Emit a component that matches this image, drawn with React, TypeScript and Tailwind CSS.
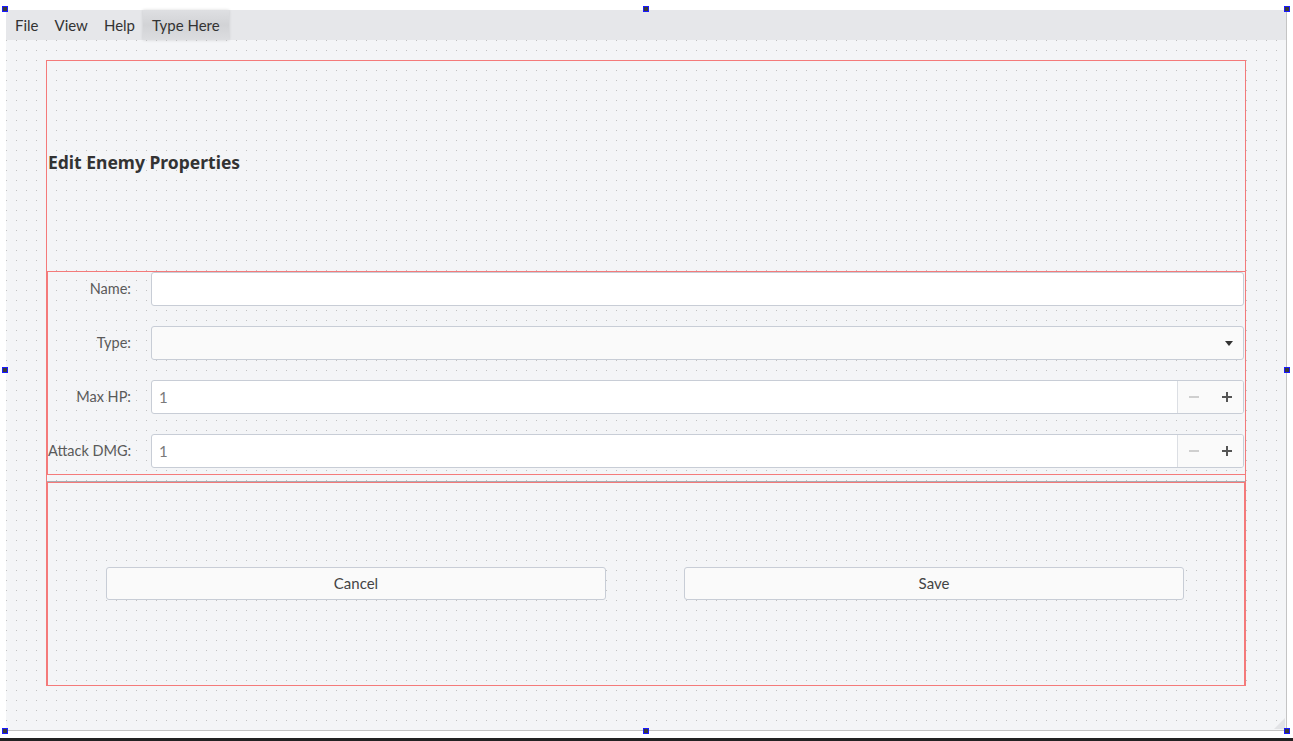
import React from "react";

const font = { fontFamily: 'Lato, "Noto Sans", "Liberation Sans", sans-serif' };
const titleFont = { fontFamily: '"Noto Sans", "Liberation Sans", sans-serif' };

function Handle({ className }: { className: string }) {
  return <div className={`absolute w-[6px] h-[6px] border border-[#1a1aff] bg-[#3a3a3a] ${className}`} />;
}

function SpinBox() {
  return (
    <div className="flex h-[34px] flex-1 bg-white border border-[#c8cdd6] rounded-[3px] overflow-hidden">
      <div className="flex-1 flex items-center pl-[7px] text-[15px] text-[#7a7a7a]">1</div>
      <div className="w-[66px] flex items-center justify-around bg-[#fafafa] border-l border-[#dcdfe4]">
        <div className="w-[10px] h-[2px] bg-[#cfcfcf]" />
        <div className="relative w-[10px] h-[10px]">
          <div className="absolute left-0 top-[4px] w-[10px] h-[2px] bg-[#555]" />
          <div className="absolute left-[4px] top-0 w-[2px] h-[10px] bg-[#555]" />
        </div>
      </div>
    </div>
  );
}

function Row({ label, children }: { label: string; children: React.ReactNode }) {
  return (
    <div className="flex items-center h-[34px]">
      <div className="w-[83px] text-right text-[14.5px] text-[#5a5a5a] whitespace-nowrap">{label}</div>
      <div className="flex flex-1 ml-[20px]">{children}</div>
    </div>
  );
}

export default function App() {
  return (
    <div className="relative w-[1293px] h-[741px] bg-white overflow-hidden" style={font}>
      <div className="pt-[10px] pl-[6px]">
        <div className="flex flex-col w-[1281px] h-[721px] bg-[#f4f5f7] border-r border-b border-[#c4c4c4]">
          {/* Menu bar */}
          <div className="flex h-[30px] bg-[#e6e7ea] text-[15px] text-[#333] items-stretch">
            <div className="pl-[9px] pr-[8px] flex items-center">File</div>
            <div className="px-[8px] flex items-center">View</div>
            <div className="px-[8px] flex items-center">Help</div>
            <div className="px-[9px] flex items-center bg-[linear-gradient(to_bottom,#dedfe2,#d2d3d6_50%,#dcdde0)] shadow-[0_0_3px_rgba(0,0,0,0.15)]">
              Type Here
            </div>
          </div>

          {/* Canvas */}
          <div className="relative flex-1 pl-[40px] pt-[20px] bg-[radial-gradient(circle_at_0_0,#c2c2c2_1px,transparent_1px)] bg-size-[10px_10px]">
            <div className="w-[1200px] flex flex-col border-l border-r border-[#f47a7a]">
              {/* Title */}
              <div className="h-[211px] border-t border-[#f47a7a] flex items-center pl-[1px] pb-[6px]">
                <h1 className="text-[17.5px] font-bold text-[#333] leading-none" style={titleFont}>
                  Edit Enemy Properties
                </h1>
              </div>

              {/* Form */}
              <div className="border border-[#f47a7a] mr-[-1px] pt-0 pb-[6px] pr-[1px] flex flex-col gap-[20px]">
                <Row label="Name:">
                  <div className="h-[34px] flex-1 bg-white border border-[#c8cdd6] rounded-[3px]" />
                </Row>
                <Row label="Type:">
                  <div className="h-[34px] flex-1 bg-[#fafafa] border border-[#c8cdd6] rounded-[3px] flex items-center justify-end pr-[10px]">
                    <svg width="8" height="5" viewBox="0 0 8 5">
                      <path d="M0 0 L8 0 L4 5 Z" fill="#333" />
                    </svg>
                  </div>
                </Row>
                <Row label="Max HP:">
                  <SpinBox />
                </Row>
                <Row label="Attack DMG:">
                  <SpinBox />
                </Row>
              </div>

              {/* Buttons */}
              <div className="mt-[6px] border-t border-[#a9adb3]">
                <div className="h-[204px] border border-[#f47a7a] flex items-center pl-[58px] pb-[2px]">
                  <div className="grid grid-cols-[500px_500px] gap-[78px]">
                    <button className="h-[33px] bg-[#fafafa] border border-[#c8cdd6] rounded-[3px] text-[15px] text-[#444]">
                      Cancel
                    </button>
                    <button className="h-[33px] bg-[#fafafa] border border-[#c8cdd6] rounded-[3px] text-[15px] text-[#444]">
                      Save
                    </button>
                  </div>
                </div>
              </div>
            </div>

            {/* size grip */}
            <svg className="absolute right-[1px] bottom-[1px]" width="11" height="11" viewBox="0 0 11 11">
              <path d="M11 0 L11 11 L0 11 Z" fill="#e2e3e6" />
            </svg>
          </div>
        </div>
      </div>
      <div className="absolute left-0 bottom-0 w-full h-[3px] bg-[#222]" />

      <Handle className="left-[2px] top-[6px]" />
      <Handle className="left-[643px] top-[6px]" />
      <Handle className="left-[1284px] top-[6px]" />
      <Handle className="left-[2px] top-[367px]" />
      <Handle className="left-[1284px] top-[367px]" />
      <Handle className="left-[2px] top-[728px]" />
      <Handle className="left-[643px] top-[728px]" />
      <Handle className="left-[1284px] top-[728px]" />
    </div>
  );
}
